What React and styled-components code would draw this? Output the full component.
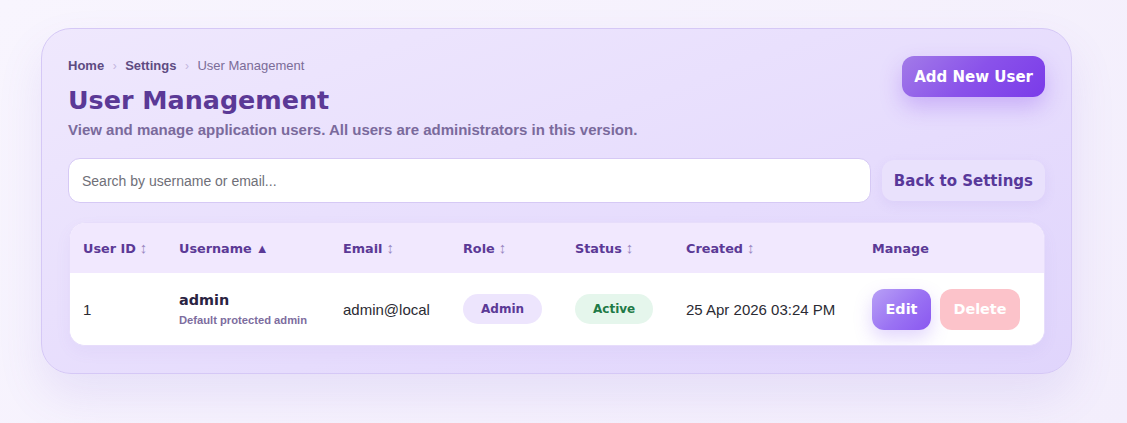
import React from "react";
import styled, { createGlobalStyle } from "styled-components";

const Global = createGlobalStyle`
  html, body { margin: 0; padding: 0; }
  body {
    font-family: "Liberation Sans", Arial, sans-serif;
    background: linear-gradient(135deg, #f8f5fe 0%, #f3eefc 100%);
    min-height: 423px;
  }
  * { box-sizing: border-box; }
`;

const heading = `"DejaVu Sans", Verdana, sans-serif`;

const Page = styled.div`
  padding: 28px 55px 48px 41px;
`;

const Card = styled.section`
  border: 1px solid #d5c8f6;
  border-radius: 30px;
  background: linear-gradient(160deg, #efe8fd 0%, #e6dcfd 60%, #e0d5fc 100%);
  box-shadow: 0 22px 45px rgba(124, 92, 210, 0.12);
  padding: 27px 26px 27px 26px;
`;

const Header = styled.div`
  display: flex;
  justify-content: space-between;
  align-items: flex-start;
`;

const TitleBlock = styled.div`
  display: flex;
  flex-direction: column;
`;

const Crumbs = styled.nav`
  display: flex;
  align-items: center;
  gap: 8.5px;
  margin-top: 1px;
  font-size: 13px;
  line-height: 18px;
`;

const Crumb = styled.span`
  color: ${(p) => (p.$current ? "#7b6c98" : "#5e4b82")};
  font-weight: ${(p) => (p.$current ? 400 : 700)};
`;

const Sep = styled.span`
  color: #c3b6de;
  font-size: 12px;
`;

const Title = styled.h1`
  margin: 10px 0 0;
  font-family: ${heading};
  font-size: 25.4px;
  line-height: 30px;
  font-weight: 700;
  color: #5b3996;
`;

const Subtitle = styled.p`
  margin: 6px 0 0;
  font-size: 15px;
  line-height: 18px;
  font-weight: 700;
  color: #7a6a9c;
`;

const PrimaryButton = styled.button`
  border: 0;
  height: 41px;
  padding: 0 12px;
  border-radius: 12px;
  font-family: ${heading};
  font-weight: 700;
  font-size: 15px;
  color: #fff;
  background: linear-gradient(135deg, #a27be8 0%, #8a52ea 50%, #7a3be9 100%);
  box-shadow: 0 10px 22px rgba(124, 58, 237, 0.28);
  cursor: pointer;
`;

const SearchRow = styled.div`
  display: flex;
  align-items: center;
  gap: 11px;
  margin-top: 19px;
`;

const Search = styled.input`
  flex: 1;
  height: 45px;
  border: 1px solid #d6c9f5;
  border-radius: 12px;
  background: #fff;
  padding: 0 13px;
  font-family: inherit;
  font-size: 14px;
  color: #333;
  outline: none;
  &::placeholder { color: #6f6f78; }
`;

const GhostButton = styled.button`
  border: 0;
  height: 41px;
  padding: 0 12px;
  border-radius: 12px;
  font-family: ${heading};
  font-weight: 700;
  font-size: 15px;
  color: #58389a;
  background: #e9e1fc;
  box-shadow: 0 4px 12px rgba(140, 110, 220, 0.1);
  cursor: pointer;
`;

const Table = styled.div`
  margin-top: 19px;
  margin-left: 1px;
  border-radius: 16px;
  overflow: hidden;
  background: #fff;
  border: 1px solid #e7ddfb;
  box-shadow: 0 6px 16px rgba(130, 100, 210, 0.06);
`;

const cols = "96px 164px 120px 112px 111px 186px 1fr";

const HeadRow = styled.div`
  display: grid;
  grid-template-columns: ${cols};
  align-items: center;
  height: 50px;
  background: #f1e8fe;
`;

const Th = styled.div`
  padding-left: 13px;
  font-family: ${heading};
  font-size: 12.8px;
  font-weight: 700;
  color: #5b3996;
  white-space: nowrap;
`;

const SortIcon = styled.span`
  font-family: "Liberation Sans", Arial, sans-serif;
  color: ${(p) => (p.$active ? "#5b3996" : "#9b88c2")};
  font-weight: ${(p) => (p.$active ? 700 : 400)};
  font-size: ${(p) => (p.$active ? "13px" : "15px")};
  line-height: 1;
  margin-left: 4px;
`;

const Row = styled.div`
  display: grid;
  grid-template-columns: ${cols};
  align-items: center;
  height: 72px;
  background: #fff;
`;

const Td = styled.div`
  padding-left: 13px;
  font-size: 15px;
  color: #2b2b33;
  white-space: nowrap;
`;

const UserName = styled.div`
  font-family: ${heading};
  font-weight: 700;
  font-size: 14.4px;
  color: #2a2342;
`;

const UserNote = styled.div`
  margin-top: 6px;
  font-size: 11.2px;
  font-weight: 700;
  color: #7d6d9e;
`;

const Pill = styled.span`
  display: inline-flex;
  align-items: center;
  justify-content: center;
  height: 30px;
  padding: 0 18px;
  border-radius: 999px;
  font-family: ${heading};
  font-size: 12px;
  font-weight: 700;
  color: ${(p) => (p.$tone === "green" ? "#1f7a47" : "#5b3996")};
  background: ${(p) => (p.$tone === "green" ? "#e5f6ec" : "#ede5fd")};
`;

const Actions = styled.div`
  display: flex;
  gap: 9px;
  padding-left: 13px;
`;

const ActionButton = styled.button`
  border: 0;
  height: 41px;
  padding: 0 13.5px;
  border-radius: 12px;
  font-family: ${heading};
  font-size: 14.4px;
  font-weight: 700;
  color: #fff;
  cursor: pointer;
  background: ${(p) =>
    p.$danger
      ? "#fcc3ca"
      : "linear-gradient(135deg, #b8a0f6 0%, #9a72f3 55%, #8a58f0 100%)"};
  box-shadow: ${(p) => (p.$danger ? "none" : "0 8px 18px rgba(139, 92, 246, 0.25)")};
`;

const headers = [
  ["User ID", "↕"],
  ["Username", "▲", true],
  ["Email", "↕"],
  ["Role", "↕"],
  ["Status", "↕"],
  ["Created", "↕"],
  ["Manage"],
];

export default function App() {
  return (
    <>
      <Global />
      <Page>
        <Card>
          <Header>
            <TitleBlock>
              <Crumbs>
                <Crumb>Home</Crumb>
                <Sep>›</Sep>
                <Crumb>Settings</Crumb>
                <Sep>›</Sep>
                <Crumb $current>User Management</Crumb>
              </Crumbs>
              <Title>User Management</Title>
              <Subtitle>
                View and manage application users. All users are administrators in this version.
              </Subtitle>
            </TitleBlock>
            <PrimaryButton>Add New User</PrimaryButton>
          </Header>
          <SearchRow>
            <Search placeholder="Search by username or email..." />
            <GhostButton>Back to Settings</GhostButton>
          </SearchRow>
          <Table>
            <HeadRow>
              {headers.map(([label, icon, active]) => (
                <Th key={label}>
                  {label}
                  {icon && <SortIcon $active={active}>{icon}</SortIcon>}
                </Th>
              ))}
            </HeadRow>
            <Row>
              <Td>1</Td>
              <Td>
                <UserName>admin</UserName>
                <UserNote>Default protected admin</UserNote>
              </Td>
              <Td>admin@local</Td>
              <Td>
                <Pill>Admin</Pill>
              </Td>
              <Td>
                <Pill $tone="green">Active</Pill>
              </Td>
              <Td>25 Apr 2026 03:24 PM</Td>
              <Actions>
                <ActionButton>Edit</ActionButton>
                <ActionButton $danger>Delete</ActionButton>
              </Actions>
            </Row>
          </Table>
        </Card>
      </Page>
    </>
  );
}
